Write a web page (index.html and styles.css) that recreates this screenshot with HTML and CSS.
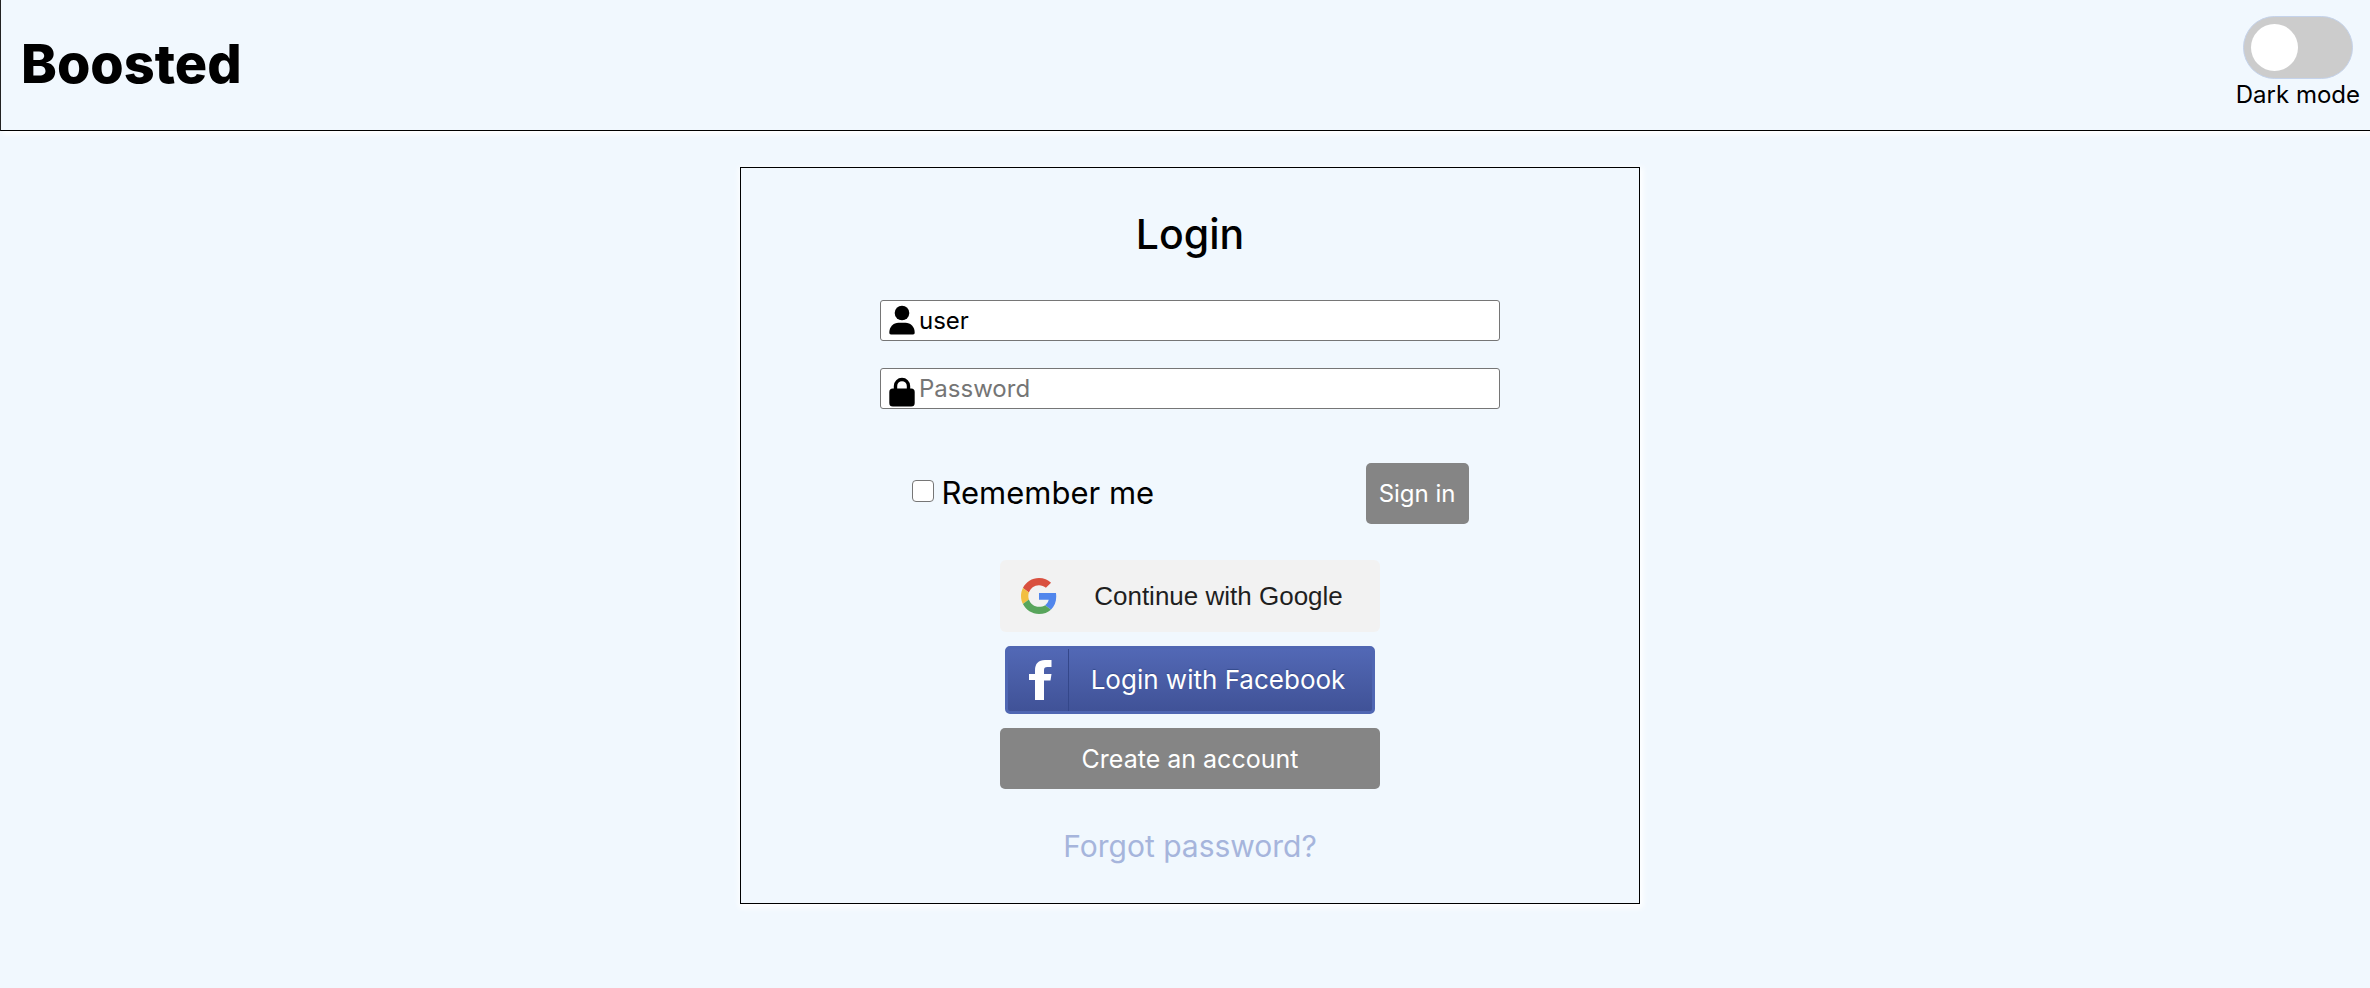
FILE: index.html
```html
<!DOCTYPE html>
<html lang="en">
<head>
<meta charset="utf-8">
<title>Boosted – Login</title>
<link rel="stylesheet" href="styles.css">
</head>
<body>
<header class="header">
  <h1 class="brand">Boosted</h1>
  <label class="theme">
    <input class="switch" type="checkbox" role="switch">
    <span>Dark mode</span>
  </label>
</header>
<main class="main">
  <form class="card">
    <h2 class="title">Login</h2>
    <div class="fields">
      <div class="field">
        <svg class="field-icon" viewBox="0 0 26 30" aria-hidden="true"><circle cx="13" cy="8" r="7.3"/><path d="M2 29.500C.8 29.500.3 28.800.3 27.500.3 22 4.500 17.800 9.500 17.800H16.500C21.500 17.800 25.700 22 25.700 27.500 25.700 28.800 25.200 29.500 24 29.500Z"/></svg>
        <input class="input" type="text" value="user" aria-label="Username">
      </div>
      <div class="field">
        <svg class="field-icon lock" viewBox="0 0 26 30" aria-hidden="true"><path d="M6.500 13V9a6.500 6.500 0 0 1 13 0v4" fill="none" stroke="#000" stroke-width="3.400"/><rect x=".3" y="11.500" width="25.400" height="18" rx="3.500"/></svg>
        <input class="input" type="password" placeholder="Password" aria-label="Password">
      </div>
    </div>
    <div class="actions">
      <label class="remember"><input class="check" type="checkbox"><span>Remember me</span></label>
      <button class="button" type="submit">Sign in</button>
    </div>
    <div class="options">
      <button class="google" type="button">
        <svg class="google-logo" viewBox="0 0 48 48" aria-hidden="true"><path fill="#d9503f" d="M24 9.500c3.540 0 6.710 1.220 9.210 3.600l6.850-6.850C35.900 2.380 30.470 0 24 0 14.620 0 6.510 5.380 2.560 13.220l7.980 6.190C12.430 13.720 17.740 9.500 24 9.500z"/><path fill="#5186ec" d="M46.980 24.550c0-1.570-.15-3.090-.38-4.550H24v9.020h12.940c-.58 2.960-2.260 5.480-4.780 7.180l7.730 6c4.510-4.180 7.090-10.360 7.090-17.650z"/><path fill="#f2bf42" d="M10.530 28.590c-.48-1.450-.76-2.990-.76-4.590s.27-3.140.76-4.590l-7.980-6.190C.92 16.460 0 20.120 0 24c0 3.880.92 7.540 2.560 10.780l7.970-6.190z"/><path fill="#58a55c" d="M24 48c6.480 0 11.930-2.130 15.890-5.810l-7.730-6c-2.150 1.450-4.920 2.300-8.160 2.300-6.260 0-11.570-4.220-13.470-9.910l-7.980 6.190C6.510 42.620 14.620 48 24 48z"/></svg>
        <span class="option-text">Continue with Google</span>
      </button>
      <button class="facebook" type="button">
        <span class="facebook-mark"><svg viewBox="0 0 23 40" aria-hidden="true"><path fill="#fff" d="M6 40V20H0V14H6V10.500C6 3.500 9.500 0 16 0H22.500V7H18.500C15.800 7 15 8 15 10.300V14H22.500L21.500 20.500H15V40Z"/></svg></span>
        <span class="option-text">Login with Facebook</span>
      </button>
      <button class="button create" type="button">Create an account</button>
    </div>
    <a class="forgot" href="#forgot">Forgot password?</a>
  </form>
</main>
</body>
</html>
```
FILE: styles.css
```css
* { box-sizing: border-box; }

body {
  margin: 0;
  min-height: 100vh;
  background: #f1f8fe;
  color: #000;
  font-family: Inter, "Noto Sans", sans-serif;
  font-size: 24px;
}

button, input { font: inherit; }
button { cursor: pointer; }

.header {
  display: flex;
  align-items: flex-start;
  justify-content: space-between;
  height: 131px;
  padding: 16px 10px 0 20px;
  border-left: 1px solid #222;
  border-bottom: 1px solid #000;
  box-shadow: 2px 3px 5px #fff;
}

.brand {
  margin: 0;
  padding-top: 14px;
  font-size: 54px;
  font-weight: 800;
  line-height: 68px;
}

.theme {
  display: flex;
  flex-direction: column;
  align-items: center;
  line-height: 32px;
}

.switch {
  appearance: none;
  display: flex;
  width: 110px;
  height: 63px;
  margin: 0;
  padding: 7px;
  border: 1px solid #c5d3eb;
  border-radius: 32px;
  background: #ccc;
}

.switch::before {
  content: "";
  width: 47px;
  height: 47px;
  border-radius: 50%;
  background: #fff;
}

.switch:checked { justify-content: flex-end; background: #536ab5; }

.main {
  display: flex;
  justify-content: center;
  padding: 36px 0 36px 10px;
}

.card {
  display: flex;
  flex-direction: column;
  align-items: center;
  width: 900px;
  max-width: 100%;
  padding: 40px 20px 38px;
  border: 1px solid #000;
  box-shadow: 1px 2px 6px 2px #fff;
}

.title {
  margin: 0 0 40px;
  font-size: 41px;
  font-weight: 500;
  line-height: 52px;
}

.fields {
  display: grid;
  gap: 27px;
  width: 620px;
  max-width: 100%;
}

.field { position: relative; }

.field-icon {
  position: absolute;
  left: 9px;
  top: 5px;
  width: 26px;
  height: 30px;
}

.lock { top: 9px; }

.input {
  display: block;
  width: 100%;
  height: 41px;
  padding: 0 8px 0 38px;
  border: 1px solid #767676;
  border-radius: 3px;
  background: #fff;
}

.input::placeholder { color: #757575; opacity: 1; }

.actions {
  display: flex;
  align-items: center;
  justify-content: space-between;
  width: 557px;
  max-width: 100%;
  margin: 54px 0 36px;
}

.remember {
  display: flex;
  align-items: center;
  gap: 8px;
  padding-bottom: 2px;
  font-size: 31px;
}

.check {
  appearance: none;
  width: 22px;
  height: 22px;
  margin: 0 0 4px;
  border: 1px solid #767676;
  border-radius: 4px;
  background: #fff;
}

.check:checked { background: #536ab5; }

.button {
  height: 61px;
  padding: 0 13px;
  border: 0;
  border-radius: 5px;
  background: #858585;
  color: #fff;
}

.options {
  display: flex;
  flex-direction: column;
  align-items: center;
  gap: 14px;
  width: 380px;
  max-width: 100%;
}

.google, .facebook {
  display: flex;
  align-items: center;
  font-size: 26px;
}

.google {
  width: 100%;
  height: 72px;
  padding: 0 30px 0 21px;
  border: 0;
  border-radius: 6px;
  background: #f2f2f2;
  color: #1f1f1f;
  font-family: "Liberation Sans", Arial, sans-serif;
}

.google-logo { width: 36px; height: 36px; }

.option-text { flex: 1; text-align: center; white-space: nowrap; }

.google .option-text { padding-left: 30px; }

.facebook {
  width: 370px;
  max-width: 100%;
  height: 68px;
  padding: 0;
  border: 3px solid #5067b3;
  border-radius: 5px;
  background: linear-gradient(#5268b5, #405297);
  color: #fff;
  text-shadow: 0 -1px 1px #354c8c;
}

.facebook .option-text { padding: 0 5px 2px 0; }

.facebook-mark {
  display: flex;
  align-items: center;
  justify-content: center;
  width: 61px;
  height: 100%;
  padding-left: 4px;
  border-right: 1px solid #34478a;
}

.facebook-mark svg { width: 23px; height: 40px; }

.create { width: 100%; font-size: 25px; }

.forgot {
  margin-top: 38px;
  color: #a6b5dc;
  font-size: 30px;
  line-height: 38px;
  text-decoration: none;
}
```
